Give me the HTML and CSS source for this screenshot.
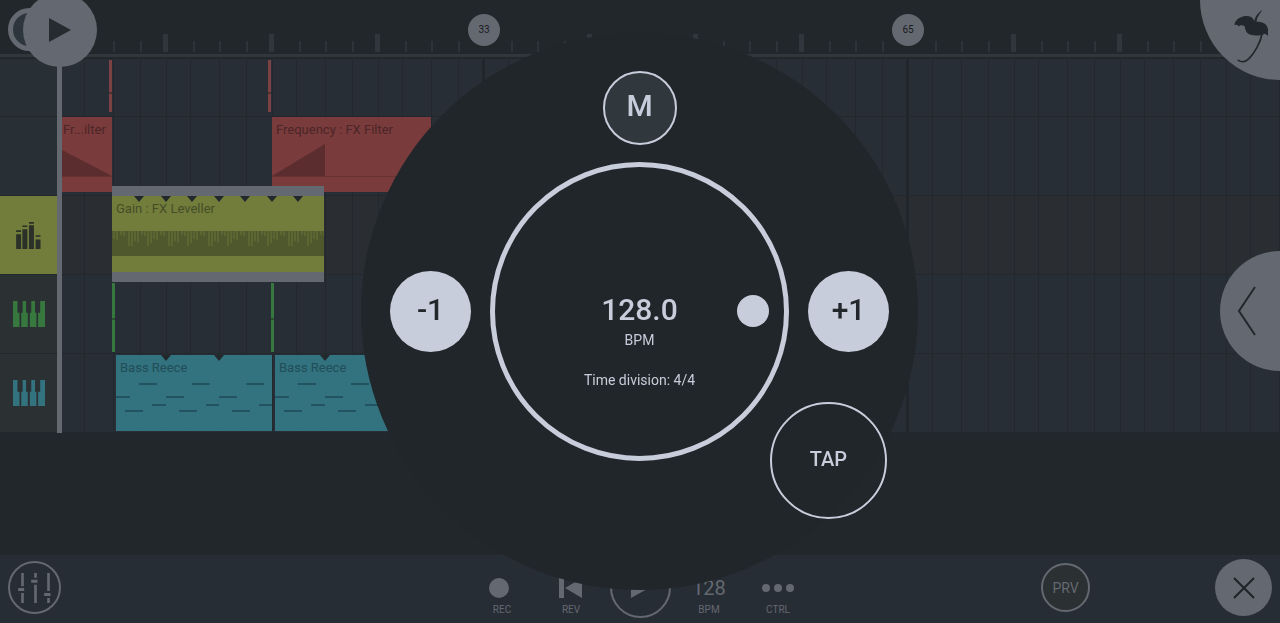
FILE: index.html
```html
<!DOCTYPE html>
<html lang="en">
<head>
    <meta charset="UTF-8">
    <meta name="viewport" content="width=device-width, initial-scale=1.0">
    <title>Playlist - Tempo</title>
    <link rel="stylesheet" href="styles.css">
</head>
<body>
    <!-- Shared shapes -->
    <svg class="defs" aria-hidden="true">
        <symbol id="piano" viewBox="0 0 93 75">
            <path d="M0 0H13V34H19V75H0ZM28 0H38V34H43V75H24V34H28ZM53 0H64V34H68V75H49V34H53ZM79 0H93V75H73V34H79Z"/>
        </symbol>
        <symbol id="notch" viewBox="0 0 10 6">
            <path d="M0 0H10L5 6Z"/>
        </symbol>
        <symbol id="bass-notes" viewBox="0 0 156 76">
            <path d="M23 28h18v2H23zM76 28h18v2H76zM130 28h18v2H130zM0 41h14v2H0zM50 41h18v2H50zM103 41h18v2H103zM36 49h14v2H36zM90 49h13v2H90zM143 49h13v2H143zM9 55h18v2H9zM63 55h18v2H63zM116 55h18v2H116z"/>
        </symbol>
    </svg>

    <div class="app">
        <header class="ruler">
            <button class="moon" aria-label="Loop"></button>
            <button class="play-head" aria-label="Play from here">
                <svg viewBox="0 0 22 24"><path d="M0 0L22 12L0 24Z"/></svg>
            </button>
            <span class="marker marker-33">33</span>
            <span class="marker marker-65">65</span>
            <button class="corner" aria-label="Home">
                <svg viewBox="60 0 240 240">
                    <path d="M163 74C168 50 198 44 212 50C219 54 221 59 223 63C225 50 235 38 246 30C240 42 230 52 230 65C245 64 262 70 264 88L264 108L256 101L246 104C238 108 222 106 212 104C200 102 196 92 194 79C186 74 180 76 176 80L173 75Z"/>
                    <path class="trunk" d="M246 102C241 130 222 160 207 176C195 188 182 186 175 181"/>
                </svg>
            </button>
        </header>

        <main class="tracks">
            <div class="track track-first">
                <div class="track-head"></div>
                <div class="lane">
                    <div class="sliver sliver-red at-tick-1"></div>
                    <div class="sliver sliver-red at-tick-2"></div>
                </div>
            </div>
            <div class="track">
                <div class="track-head"></div>
                <div class="lane">
                    <div class="clip clip-red filter-a">
                        <span class="clip-name">Fr...ilter</span>
                        <svg class="envelope" viewBox="0 0 50 75"><path d="M0 33L50 59H0Z"/></svg>
                    </div>
                    <div class="clip clip-red filter-b">
                        <span class="clip-name">Frequency : FX Filter</span>
                        <svg class="envelope" viewBox="0 0 159 75"><path d="M0 59L53 27V59Z"/></svg>
                    </div>
                </div>
            </div>
            <div class="track track-selected">
                <div class="track-head head-olive">
                    <svg class="eq" viewBox="0 0 75 82"><path d="M0 37H15V82H0ZM0 25H15V30H0ZM19 22H34V82H19ZM19 11H34V15H19ZM39 10H54V82H39ZM39 0H54V5H39ZM59 53H74V82H59ZM59 40H74V45H59Z"/></svg>
                </div>
                <div class="lane">
                    <div class="clip clip-olive gain">
                        <span class="clip-name">Gain : FX Leveller</span>
                        <svg class="notches" viewBox="0 0 212 6">
                            <use href="#notch" x="22" width="10" height="6"/>
                            <use href="#notch" x="49" width="10" height="6"/>
                            <use href="#notch" x="75" width="10" height="6"/>
                            <use href="#notch" x="102" width="10" height="6"/>
                            <use href="#notch" x="128" width="10" height="6"/>
                            <use href="#notch" x="155" width="10" height="6"/>
                            <use href="#notch" x="181" width="10" height="6"/>
                        </svg>
                        <svg class="level" viewBox="0 0 212 25">
                            <defs>
                                <pattern id="spikes" width="40" height="25" patternUnits="userSpaceOnUse">
                                    <path d="M2 0V8M5 0V9M9 0V4M12 0V5M17 0V15M20 0V15M23 0V10M26 0V11M30 0V4M33 0V5M36 0V15M39 0V12"/>
                                </pattern>
                            </defs>
                            <rect class="spikes" width="212" height="25" fill="url(#spikes)"/>
                        </svg>
                    </div>
                </div>
            </div>
            <div class="track">
                <div class="track-head head-grey"><svg class="keys keys-green"><use href="#piano"/></svg></div>
                <div class="lane">
                    <div class="sliver sliver-green at-tick-1"></div>
                    <div class="sliver sliver-green at-tick-2"></div>
                </div>
            </div>
            <div class="track">
                <div class="track-head head-grey"><svg class="keys keys-teal"><use href="#piano"/></svg></div>
                <div class="lane">
                    <div class="clip clip-teal bass-a">
                        <span class="clip-name">Bass Reece</span>
                        <svg class="notches" viewBox="0 0 156 6">
                            <use href="#notch" x="45" width="10" height="6"/>
                            <use href="#notch" x="98" width="10" height="6"/>
                        </svg>
                        <svg class="notes"><use href="#bass-notes"/></svg>
                    </div>
                    <div class="clip clip-teal bass-b">
                        <span class="clip-name">Bass Reece</span>
                        <svg class="notches" viewBox="0 0 156 6">
                            <use href="#notch" x="45" width="10" height="6"/>
                            <use href="#notch" x="98" width="10" height="6"/>
                        </svg>
                        <svg class="notes"><use href="#bass-notes"/></svg>
                    </div>
                </div>
            </div>
            <div class="playline"></div>
        </main>

        <button class="drawer" aria-label="Open drawer">
            <svg viewBox="0 0 20 50"><path d="M18 1L2 25L18 49"/></svg>
        </button>

        <footer class="toolbar">
            <button class="round mixer" aria-label="Mixer">
                <svg viewBox="0 0 98 90">
                    <path d="M9 0H17V40H9ZM0 45H18V54H0ZM9 60H17V90H9ZM48 0H56V14H48ZM39 20H58V29H39ZM48 35H56V90H48ZM87 0H95V54H87ZM78 60H97V69H78ZM87 75H95V90H87Z"/>
                </svg>
            </button>
            <nav class="transport">
                <button class="tool">
                    <svg viewBox="0 0 26 20"><circle cx="10" cy="10" r="10"/></svg>
                    <span>REC</span>
                </button>
                <button class="tool">
                    <svg viewBox="0 0 26 20"><path d="M1 0H6V20H1ZM7 10L24 0V20Z"/></svg>
                    <span>REV</span>
                </button>
                <button class="tool-play" aria-label="Play">
                    <svg viewBox="0 0 18 20"><path d="M0 0L18 10L0 20Z"/></svg>
                </button>
                <button class="tool">
                    <strong>128</strong>
                    <span>BPM</span>
                </button>
                <button class="tool">
                    <svg class="dots" viewBox="0 0 32 20"><circle cx="4" cy="10" r="4"/><circle cx="16" cy="10" r="4"/><circle cx="28" cy="10" r="4"/></svg>
                    <span>CTRL</span>
                </button>
            </nav>
            <div class="toolbar-right">
                <button class="round preview">PRV</button>
                <button class="close" aria-label="Close">
                    <svg viewBox="0 0 22 22"><path d="M1 1L21 21M21 1L1 21"/></svg>
                </button>
            </div>
        </footer>
    </div>

    <!-- Tempo dialog -->
    <div class="overlay">
        <section class="tempo" role="dialog" aria-label="Tempo">
            <button class="metronome">M</button>
            <button class="step">-1</button>
            <div class="dial">
                <output class="bpm">128.0</output>
                <span class="unit">BPM</span>
                <button class="division">Time division: 4/4</button>
                <button class="knob" aria-label="Tempo dial"></button>
            </div>
            <button class="step">+1</button>
            <button class="tap">TAP</button>
        </section>
    </div>
</body>
</html>
```
FILE: styles.css
```css
* {
    box-sizing: border-box;
}

:root {
    --dark: #22272b;
    --lane: #282e35;
    --line: #22282d;
    --grey: #646870;
    --light: #c8cddc;
}

body {
    margin: 0;
    font-family: Roboto, sans-serif;
    background-color: var(--dark);
    color: var(--light);
    overflow: hidden;
}

button {
    padding: 0;
    border: none;
    background: none;
    color: inherit;
    font: inherit;
    cursor: pointer;
}

svg {
    display: block;
}

.defs {
    position: absolute;
    width: 0;
    height: 0;
}

.app {
    position: relative;
    display: flex;
    flex-direction: column;
    min-height: 100vh;
}

/* Ruler */
.ruler {
    position: relative;
    z-index: 3;
    height: 59px;
    background-image:
        linear-gradient(#2f373c, #2f373c),
        linear-gradient(var(--dark), var(--dark)),
        linear-gradient(90deg, #30363c 5px, transparent 5px),
        linear-gradient(90deg, transparent 30px, #2d3338 30px, #2d3338 32px, transparent 32px, transparent 56px, #2d3338 56px, #2d3338 58px, transparent 58px, transparent 83px, #2d3338 83px, #2d3338 85px, transparent 85px);
    background-repeat: no-repeat, no-repeat, repeat-x, repeat-x;
    background-size: 100% 3px, 57px 18px, 106px 18px, 106px 11px;
    background-position: 0 54px, 0 34px, 57px 34px, 57px 41px;
}

.moon {
    position: absolute;
    left: 8px;
    top: 8px;
    width: 43px;
    height: 43px;
    border: 5px solid var(--grey);
    border-radius: 50%;
    background-color: #2d353d;
}

.play-head {
    position: absolute;
    left: 23px;
    top: -7px;
    width: 74px;
    height: 74px;
    display: flex;
    align-items: center;
    justify-content: center;
    border-radius: 50%;
    background-color: var(--grey);
}

.play-head svg {
    width: 22px;
    height: 24px;
    fill: #262b30;
}

.marker {
    position: absolute;
    top: 14px;
    width: 32px;
    height: 32px;
    border-radius: 50%;
    background-color: var(--grey);
    color: #181b1e;
    font-size: 10px;
    line-height: 32px;
    text-align: center;
    box-shadow: 0 0 0 7px var(--dark);
}

.marker-33 {
    left: 468px;
}

.marker-65 {
    left: 892px;
}

.corner {
    position: absolute;
    top: 0;
    right: 0;
    width: 80px;
    height: 80px;
    border-bottom-left-radius: 80px;
    background-color: var(--grey);
}

.corner svg {
    width: 80px;
    height: 80px;
    fill: #22272d;
}

.corner .trunk {
    fill: none;
    stroke: #22272d;
    stroke-width: 5;
    stroke-linecap: round;
}

/* Tracks */
.tracks {
    position: relative;
}

.track {
    position: relative;
    display: flex;
    height: 79px;
}

.track-first {
    height: 58px;
}

.track-selected {
    z-index: 1;
}

.track-head {
    flex: none;
    width: 57px;
    display: flex;
    align-items: center;
    justify-content: center;
    background-color: #283036;
    border-bottom: 1px solid var(--line);
}

.head-olive {
    background-color: #727d3b;
}

.head-grey {
    background-color: #2b3033;
}

.eq {
    width: 25px;
    height: 27px;
    fill: #2b3029;
}

.keys {
    width: 32px;
    height: 26px;
}

.keys-green {
    fill: #37783f;
}

.keys-teal {
    fill: #33727f;
}

/* One cell is two bars, with a heavier line every 32 bars */
.lane {
    flex: 1;
    position: relative;
    background-color: var(--lane);
    background-image:
        linear-gradient(90deg, transparent 1px, #21262c 1px, #21262c 4px, transparent 4px),
        linear-gradient(90deg, transparent 3px, var(--line) 3px, var(--line) 4px, transparent 4px, transparent 27px, var(--line) 27px, var(--line) 28px, transparent 28px, transparent 56px, var(--line) 56px, var(--line) 57px, transparent 57px, transparent 83px, var(--line) 83px, var(--line) 84px, transparent 84px);
    background-size: 424px 100%, 106px 100%;
    border-bottom: 1px solid var(--line);
}

.track-selected .lane {
    background-color: #2a2e32;
}

.playline {
    position: absolute;
    left: 57px;
    top: 0;
    bottom: 0;
    z-index: 2;
    width: 5px;
    background-color: var(--grey);
}

.clip {
    position: absolute;
    top: 0;
    height: 75px;
    overflow: hidden;
    font-size: 13px;
    line-height: 16px;
    white-space: nowrap;
}

.clip-name {
    display: block;
    padding: 5px 4px 0;
}

.clip-red {
    background: linear-gradient(#683234, #683234) 0 59px / 100% 1px no-repeat #7a3b3c;
    color: #4b2628;
}

.clip-olive {
    background-color: #727d3b;
    color: #454d28;
}

.clip-teal {
    top: 1px;
    height: 76px;
    background-color: #33727f;
    color: #214d58;
}

.filter-a {
    left: 5px;
    width: 50px;
}

.filter-a .clip-name {
    padding-left: 1px;
}

.filter-b {
    left: 215px;
    width: 159px;
}

.gain {
    top: -10px;
    left: 55px;
    width: 212px;
    height: 96px;
    border: solid var(--grey);
    border-width: 10px 0;
}

.bass-a {
    left: 59px;
    width: 156px;
}

.bass-b {
    left: 218px;
    width: 156px;
}

.envelope,
.notches,
.level,
.notes {
    position: absolute;
    left: 0;
    top: 0;
    width: 100%;
}

.envelope {
    height: 75px;
    fill: #5b2d2f;
}

.notches {
    height: 6px;
    fill: #22282c;
}

.level {
    top: 35px;
    height: 25px;
    background-color: #4f582c;
    stroke: #687438;
}

.level .spikes {
    stroke: none;
}

.notes {
    height: 76px;
    fill: #22535f;
}

.sliver {
    position: absolute;
    width: 3px;
}

.sliver-red {
    top: 1px;
    height: 52px;
    background: linear-gradient(#7d4043 32px, #4b3035 32px, #4b3035 34px, #7d4043 34px);
}

.sliver-green {
    top: 8px;
    height: 69px;
    background: linear-gradient(#37783f 35px, #29502f 35px, #29502f 37px, #37783f 37px);
}

.sliver-red.at-tick-1 {
    left: 52px;
}

.sliver-red.at-tick-2 {
    left: 211px;
}

.sliver-green.at-tick-1 {
    left: 55px;
}

.sliver-green.at-tick-2 {
    left: 214px;
}

.drawer {
    position: absolute;
    right: 0;
    top: 50%;
    z-index: 3;
    width: 60px;
    height: 120px;
    margin-top: -61px;
    padding-left: 17px;
    border-radius: 60px 0 0 60px;
    background-color: var(--grey);
}

.drawer svg {
    width: 20px;
    height: 50px;
    fill: none;
    stroke: #22272d;
    stroke-width: 2;
}

/* Toolbar */
.toolbar {
    display: grid;
    grid-template-columns: 1fr auto 1fr;
    align-items: center;
    height: 68px;
    margin-top: auto;
    padding: 0 8px 3px;
    background-color: #272d35;
    color: var(--grey);
}

.round {
    display: flex;
    align-items: center;
    justify-content: center;
    border: 2px solid var(--grey);
    border-radius: 50%;
}

.mixer {
    width: 53px;
    height: 53px;
}

.mixer svg {
    width: 33px;
    height: 30px;
    fill: var(--grey);
}

.transport {
    display: flex;
    align-items: center;
}

.tool {
    display: flex;
    flex-direction: column;
    align-items: center;
    gap: 5px;
    width: 69px;
    padding-top: 20px;
    font-size: 10px;
    line-height: 14px;
}

.tool svg {
    width: 26px;
    height: 20px;
    fill: var(--grey);
}

.tool .dots {
    width: 32px;
}

.tool strong {
    font-size: 20px;
    font-weight: 400;
    line-height: 20px;
}

.tool-play {
    display: flex;
    align-items: center;
    justify-content: center;
    width: 61px;
    height: 61px;
    margin: 0 4px;
    border: 2px solid var(--grey);
    border-radius: 50%;
}

.tool-play svg {
    width: 18px;
    height: 20px;
    fill: var(--grey);
}

.toolbar-right {
    display: flex;
    align-items: center;
    justify-content: flex-end;
    gap: 125px;
}

.preview {
    width: 49px;
    height: 49px;
    background-color: #2b3033;
    font-size: 14px;
}

.close {
    display: flex;
    align-items: center;
    justify-content: center;
    width: 57px;
    height: 57px;
    border-radius: 50%;
    background-color: var(--grey);
}

.close svg {
    width: 22px;
    height: 22px;
    stroke: #1e2226;
    stroke-width: 2;
}

/* Tempo dialog */
.overlay {
    position: fixed;
    inset: 0;
    z-index: 10;
    display: grid;
    place-items: center;
    padding: 0 1px 1px 0;
}

.tempo {
    position: relative;
    display: grid;
    grid-template-columns: 81px 299px 81px;
    grid-template-rows: 1fr 299px 1fr;
    justify-content: center;
    align-items: center;
    column-gap: 19px;
    width: 557px;
    height: 557px;
    border-radius: 50%;
    background-color: #21262a;
    font-weight: 500;
}

.metronome {
    grid-column: 1 / -1;
    align-self: end;
    justify-self: center;
    width: 74px;
    height: 74px;
    margin-bottom: 17px;
    padding-bottom: 4px;
    border: 2px solid var(--light);
    border-radius: 50%;
    background-color: #30383d;
    font-size: 30px;
}

.step {
    width: 81px;
    height: 81px;
    padding-bottom: 4px;
    border-radius: 50%;
    background-color: var(--light);
    color: #22272b;
    font-size: 30px;
}

.dial {
    position: relative;
    display: flex;
    flex-direction: column;
    align-items: center;
    height: 299px;
    padding-top: 123px;
    border: 5px solid var(--light);
    border-radius: 50%;
    font-size: 14px;
    line-height: 20px;
}

.bpm {
    font-size: 30px;
    line-height: 40px;
}

.unit,
.division {
    font-weight: 400;
}

.division {
    margin-top: 20px;
}

.knob {
    position: absolute;
    top: 50%;
    right: 15px;
    width: 32px;
    height: 32px;
    margin-top: -16px;
    border-radius: 50%;
    background-color: var(--light);
}

.tap {
    position: absolute;
    right: 31px;
    bottom: 71px;
    width: 117px;
    height: 117px;
    padding-bottom: 2px;
    border: 2px solid var(--light);
    border-radius: 50%;
    font-size: 20px;
}
```
